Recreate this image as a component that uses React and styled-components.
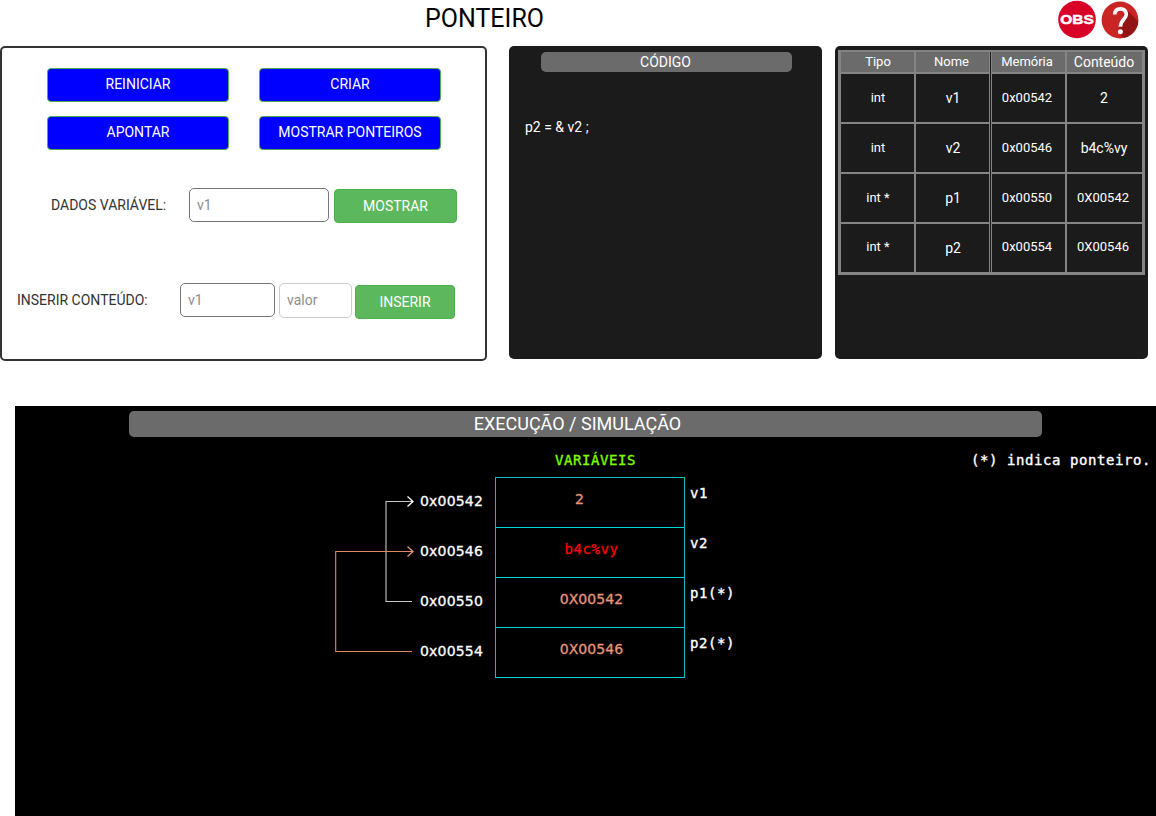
import React from "react";
import styled, { createGlobalStyle } from "styled-components";

const GlobalStyle = createGlobalStyle`
  *, *::before, *::after { box-sizing: border-box; }
  html, body { margin: 0; padding: 0; background: #fff; overflow: hidden; }
  body { font-family: Roboto, "Liberation Sans", sans-serif; font-size: 14px; line-height: 20px; color: #333; }
`;

const Page = styled.div`
  width: 1156px;
  height: 816px;
  overflow: hidden;
  display: flex;
  flex-direction: column;
`;

const Header = styled.header`
  height: 46px;
  flex: none;
  display: flex;
  justify-content: space-between;
  padding: 0 17px 0 425px;
`;

const Title = styled.h1`
  margin: 0;
  padding-top: 1px;
  font-weight: 400;
  font-size: 25px;
  line-height: 35px;
  color: #000;
`;

const HeaderIcons = styled.div`
  display: flex;
  gap: 5px;
  svg { display: block; }
`;

const Panels = styled.main`
  height: 360px;
  flex: none;
  display: flex;
  align-items: flex-start;
`;

const Controls = styled.section`
  width: 487px;
  height: 315px;
  border: 2px solid #333;
  border-radius: 5px;
  margin-right: 22px;
  padding-top: 20px;
`;

const ActionGrid = styled.div`
  display: grid;
  grid-template-columns: 182px 182px;
  grid-auto-rows: 34px;
  gap: 14px 30px;
  padding-left: 45px;
`;

const Button = styled.button`
  width: ${(p) => p.$width || "100%"};
  height: 34px;
  border: 1px solid #4cae4c;
  border-radius: 4px;
  background: ${(p) => (p.$primary ? "#00f" : "#5cb85c")};
  color: #fff;
  font: inherit;
  line-height: 20px;
  padding: 0 0 ${(p) => (p.$primary ? "2px" : "0")} 0;
`;

const FieldRow = styled.div`
  display: flex;
  align-items: flex-start;
  margin-top: ${(p) => p.$top};
  padding-left: ${(p) => p.$left};
`;

const Label = styled.label`
  width: ${(p) => p.$width};
  line-height: 34px;
  white-space: nowrap;
`;

const Input = styled.input`
  width: ${(p) => p.$width};
  height: ${(p) => (p.$light ? "35px" : "34px")};
  margin-right: ${(p) => p.$gap};
  padding: 0 7px ${(p) => (p.$light ? "2px" : "0")};
  border: 1px solid ${(p) => (p.$light ? "#ccc" : "#767676")};
  border-radius: 5px;
  background: #fff;
  font: inherit;
  &::placeholder { color: #8e8e8e; opacity: 1; }
`;

const Offset = styled.div`
  padding-top: ${(p) => p.$top};
`;

const DarkPanel = styled.section`
  width: 313px;
  height: 313px;
  border-radius: 5px;
  background: #1b1b1b;
  color: #fff;
  margin-right: 13px;
  flex: none;
`;

const CodeTitle = styled.h2`
  width: 251px;
  height: 20px;
  margin: 6px 0 0 32px;
  border-radius: 5px;
  background: #6b6b6b;
  font-size: 14px;
  font-weight: 400;
  line-height: 21px;
  text-align: center;
  padding-right: 2px;
`;

const CodeLine = styled.p`
  margin: 45px 0 0 16px;
  line-height: 20px;
`;

const CodePanel = styled(DarkPanel)`
  padding-top: 0.1px;
`;

const MemoryPanel = styled(DarkPanel)`
  padding: 4px 3px;
  margin-right: 0;
`;

const MemoryTable = styled.div`
  width: 307px;
  border: 3px solid #848484;
  border-top-width: 2px;
  display: grid;
  grid-template-columns: 75px 75px 76px 75px;
  grid-template-rows: 22px repeat(3, 50px) 48px;
`;

const Cell = styled.div`
  display: flex;
  align-items: center;
  justify-content: center;
  background: ${(p) => (p.$head ? "#6b6b6b" : "#1b1b1b")};
  border: 0 solid #848484;
  border-bottom-width: ${(p) => (p.$last ? 0 : "2px")};
  border-right-width: ${(p) => ["2px", "1px", "2px", 0][p.$col]};
  border-left-width: ${(p) => (p.$col === 2 ? "1px" : 0)};
  margin-right: ${(p) => (p.$col === 1 ? "1px" : 0)};
  font-size: ${(p) => (p.$large ? "14px" : "13px")};
  padding-left: ${(p) => (p.$col === 0 || (p.$col === 1 && !p.$head) ? "1px" : 0)};
  padding-right: ${(p) => {
    if (p.$col === 2) return "3px";
    if (p.$col === 3) return p.$large ? "1px" : "3px";
    return p.$col === 1 && p.$head ? "2px" : 0;
  }};
  padding-bottom: ${(p) => (p.$last && !p.$large ? "3px" : "1px")};
`;

const Stage = styled.section`
  margin-left: 15px;
  height: 410px;
  background: #000;
  color: #fff;
  padding-top: 5px;
`;

const StageTitle = styled.h2`
  width: 913px;
  height: 26px;
  margin: 0 0 0 114px;
  padding-right: 16px;
  border-radius: 5px;
  background: #6b6b6b;
  font-size: 18px;
  font-weight: 400;
  line-height: 26px;
  text-align: center;
`;

const Legend = styled.div`
  display: flex;
  justify-content: space-between;
  height: 40px;
  padding: 13px 5px 0 540px;
  font: 14px/20px "DejaVu Sans Mono", monospace;
  letter-spacing: 0.57px;
  white-space: pre;
  -webkit-text-stroke: 0.35px currentColor;
`;

const LegendTitle = styled.span`
  color: #7cfc00;
`;

const Diagram = styled.div`
  display: flex;
  padding-left: 315px;
`;

const Arrows = styled.svg`
  display: block;
  width: 90px;
  height: 200px;
  flex: none;
`;

const DiagramColumn = styled.div`
  display: grid;
  grid-auto-rows: 50px;
  width: ${(p) => p.$width};
  padding-top: ${(p) => p.$top};
  padding-left: ${(p) => p.$left || 0};
`;

const DiagramText = styled.span`
  font: 14px/20px "DejaVu Sans", sans-serif;
  letter-spacing: 0.18px;
  -webkit-text-stroke: 0.3px currentColor;
`;

const MemoryBlock = styled.div`
  display: grid;
  grid-auto-rows: 50px;
  width: 190px;
  height: 201px;
  border: 1px solid #10bcbc;
  border-bottom-color: #00d5d5;
`;

const Slot = styled.div`
  display: flex;
  justify-content: center;
  padding: 11px ${(p) => p.$shift} 0 0;
  border-bottom: 1px solid #00d5d5;
  color: ${(p) => (p.$changed ? "#f00" : "#e9967a")};
  font: 14px/20px ${(p) => (p.$mono ? '"DejaVu Sans Mono", monospace' : '"DejaVu Sans", sans-serif')};
  letter-spacing: ${(p) => (p.$mono ? "0.57px" : "0.1px")};
  -webkit-text-stroke: 0.3px currentColor;
  text-indent: ${(p) => (p.$indent ? "3px" : 0)};
  &:last-child { border-bottom: 0; }
`;

const SlotName = styled.span`
  font: 14px/20px "DejaVu Sans Mono", monospace;
  letter-spacing: 0.57px;
  -webkit-text-stroke: 0.35px currentColor;
`;

const ObsText = styled.text`
  font: 700 12.6px "Liberation Sans", sans-serif;
  fill: #fff;
  stroke: #fff;
  stroke-width: 0.5px;
`;

const ObsIcon = () => (
  <svg width="38" height="40" viewBox="0 0 38 40" role="img" aria-label="OBS">
    <circle cx="19" cy="19.5" r="18.8" fill="#d80027" />
    <ObsText x="2.3" y="24" textLength="33.4" lengthAdjust="spacingAndGlyphs">OBS</ObsText>
  </svg>
);

const HelpIcon = () => (
  <svg width="38" height="40" viewBox="0 0 38 40" role="img" aria-label="Ajuda">
    <defs>
      <clipPath id="help-disc"><circle cx="19" cy="20" r="18.4" /></clipPath>
    </defs>
    <circle cx="19" cy="20" r="18.4" fill="#cb2425" />
    <path d="M25 9 L45 29 L38 45 L28 43.5 L17.5 33 L19 24 Z" fill="#911515" clipPath="url(#help-disc)" />
    <path d="M13.7 14.6 C13.7 10.4 15.8 8.8 19.4 8.8 C23.2 8.8 25.3 11 25.3 14.2 C25.3 19.2 19.5 19.6 19.5 26.8" fill="none" stroke="#fff" strokeWidth="3.7" />
    <circle cx="19.4" cy="31.8" r="2.5" fill="#fff" />
  </svg>
);

const headers = ["Tipo", "Nome", "Memória", "Conteúdo"];
const rows = [
  ["int", "v1", "0x00542", "2"],
  ["int", "v2", "0x00546", "b4c%vy"],
  ["int *", "p1", "0x00550", "0X00542"],
  ["int *", "p2", "0x00554", "0X00546"],
];

export default function App() {
  return (
    <Page>
      <GlobalStyle />
      <Header>
        <Title>PONTEIRO</Title>
        <HeaderIcons>
          <ObsIcon />
          <HelpIcon />
        </HeaderIcons>
      </Header>
      <Panels>
        <Controls>
          <ActionGrid>
            <Button $primary>REINICIAR</Button>
            <Button $primary>CRIAR</Button>
            <Button $primary>APONTAR</Button>
            <Button $primary>MOSTRAR PONTEIROS</Button>
          </ActionGrid>
          <FieldRow $top="38px" $left="49px">
            <Label $width="138px">DADOS VARIÁVEL:</Label>
            <Input $width="140px" $gap="5px" placeholder="v1" />
            <Offset $top="1px"><Button $width="123px">MOSTRAR</Button></Offset>
          </FieldRow>
          <FieldRow $top="60px" $left="15px">
            <Label $width="163px">INSERIR CONTEÚDO:</Label>
            <Input $width="95px" $gap="4px" placeholder="v1" />
            <Input $width="73px" $gap="3px" $light placeholder="valor" />
            <Offset $top="2px"><Button $width="100px">INSERIR</Button></Offset>
          </FieldRow>
        </Controls>
        <CodePanel>
          <CodeTitle>CÓDIGO</CodeTitle>
          <CodeLine>p2 = &amp; v2 ;</CodeLine>
        </CodePanel>
        <MemoryPanel>
          <MemoryTable>
            {headers.map((h, c) => (
              <Cell key={h} $head $col={c} $large={c === 3}>{h}</Cell>
            ))}
            {rows.map((row, r) =>
              row.map((value, c) => (
                <Cell
                  key={`${r}-${c}`}
                  $col={c}
                  $last={r === 3}
                  $large={c === 1 || (c === 3 && r < 2)}
                >
                  {value}
                </Cell>
              ))
            )}
          </MemoryTable>
        </MemoryPanel>
      </Panels>
      <Stage>
        <StageTitle>EXECUÇÃO / SIMULAÇÃO</StageTitle>
        <Legend>
          <LegendTitle>VARIÁVEIS</LegendTitle>
          <span>(*) indica ponteiro.</span>
        </Legend>
        <Diagram>
          <Arrows viewBox="0 0 90 200" fill="none">
            <path d="M82 124.5 H56 V24.5 H83" stroke="#c8c8c8" strokeWidth="1.1" />
            <path d="M77.5 19.5 L83 24.5 L77.5 29.5" stroke="#fff" strokeWidth="1.3" />
            <path d="M82 174.5 H5.7 V74.5 H83" stroke="#e08a6c" strokeWidth="1.1" />
            <path d="M77.5 69.5 L83 74.5 L77.5 79.5" stroke="#e9967a" strokeWidth="1.3" />
          </Arrows>
          <DiagramColumn $width="75px" $top="14px">
            {rows.map((r) => <DiagramText key={r[2]}>{r[2]}</DiagramText>)}
          </DiagramColumn>
          <MemoryBlock>
            <Slot $shift="21px">2</Slot>
            <Slot $shift="0" $mono $changed $indent>b4c%vy</Slot>
            <Slot $shift="0" $indent>0X00542</Slot>
            <Slot $shift="0" $indent>0X00546</Slot>
          </MemoryBlock>
          <DiagramColumn $width="80px" $top="6px" $left="5px">
            {["v1", "v2", "p1(*)", "p2(*)"].map((n) => <SlotName key={n}>{n}</SlotName>)}
          </DiagramColumn>
        </Diagram>
      </Stage>
    </Page>
  );
}
